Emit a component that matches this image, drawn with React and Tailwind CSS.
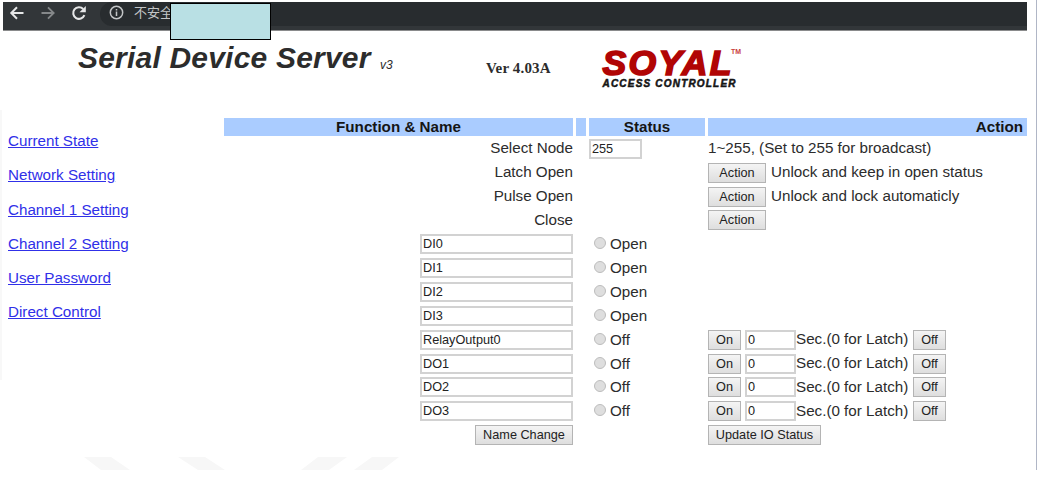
import React from "react";

const links = [
  "Current State",
  "Network Setting",
  "Channel 1 Setting",
  "Channel 2 Setting",
  "User Password",
  "Direct Control",
];

const inputs = ["DI0", "DI1", "DI2", "DI3"];
const outputs = ["RelayOutput0", "DO1", "DO2", "DO3"];

function Btn({ children, className }) {
  return (
    <button
      type="button"
      className={`h-5 shrink-0 border border-[#b4b4b4] bg-linear-to-b from-[#f4f4f4] to-[#dedede] text-center text-[12.7px] leading-[18px] whitespace-nowrap text-[#222] ${className}`}
    >
      {children}
    </button>
  );
}

function Field({ value, className }) {
  return (
    <input
      type="text"
      defaultValue={value}
      className={`h-5 shrink-0 border-2 border-[#d2d2d2] bg-white px-px text-[12.7px] leading-4 text-[#222] outline-none ${className}`}
    />
  );
}

function Row({ name, status, action }) {
  return (
    <div className="grid h-[23.86px] grid-cols-[349px_10px_116px_319px] items-center gap-x-[3px]">
      <div className="flex items-center justify-end">{name}</div>
      <div />
      <div className="flex items-center">{status}</div>
      <div className="flex items-center whitespace-nowrap">{action}</div>
    </div>
  );
}

function Radio({ label }) {
  return (
    <span className="flex items-center pl-[5px]">
      <span className="mb-[2px] size-[12px] rounded-full border border-[#bdbdbd] bg-[#dedede]" />
      <span className="pl-1 leading-5">{label}</span>
    </span>
  );
}

function BrowserBar() {
  return (
    <div className="ml-[3px] flex h-[29px] w-[1024px] border-b border-[#8a8b8c] bg-[#323639]">
      <div className="flex h-[21px] w-[97px] items-center pl-[6px]">
        <svg className="size-4" viewBox="0 0 16 16" fill="none" stroke="#e6e7e8" strokeWidth="2">
          <path d="M14.5 8H2.5M8 2.3 2.3 8 8 13.7" />
        </svg>
        <svg className="ml-[15px] size-4" viewBox="0 0 16 16" fill="none" stroke="#85888a" strokeWidth="1.8">
          <path d="M1.5 8h12M8 2.3 13.7 8 8 13.7" />
        </svg>
        <svg className="ml-[15px] size-4" viewBox="0 0 16 16" fill="none" stroke="#e6e7e8" strokeWidth="2.1">
          <path d="M13.4 10.2A5.8 5.8 0 1 1 12.2 4" />
          <path d="M14.8 1v6.3H8.5z" fill="#e6e7e8" stroke="none" />
        </svg>
      </div>
      <div className="flex h-[24px] grow rounded-l-full bg-[#282c2f] pl-[9px]">
        <svg className="mt-[3px] size-[15px]" viewBox="0 0 16 16" fill="none" stroke="#c3c5c7" strokeWidth="1.6">
          <circle cx="8" cy="8" r="6.6" />
          <path d="M8 7v4.8M8 4.2v1.7" />
        </svg>
        <span className="ml-[10px] font-['Noto_Sans_CJK_SC',sans-serif] text-[13px] leading-[20px] text-[#c3c5c7]">
          不安全
        </span>
      </div>
    </div>
  );
}

function Logo() {
  return (
    <svg className="ml-[48px] h-[50px] w-[145px]" viewBox="0 0 145 50">
      <g fontFamily="Liberation Sans, sans-serif" fontWeight="bold" fontStyle="italic">
        <text x="2.5" y="34.3" fontSize="35.5" fill="#b10505" stroke="#b10505" strokeWidth="1.7" textLength="129" lengthAdjust="spacing">
          SOYAL
        </text>
        <text x="2.5" y="45.8" fontSize="10" fill="#151515" stroke="#151515" strokeWidth="0.5" textLength="133" lengthAdjust="spacing">
          ACCESS CONTROLLER
        </text>
      </g>
      <text x="131" y="12.5" fontFamily="Liberation Sans, sans-serif" fontWeight="bold" fontSize="6.5" fill="#c94040" textLength="10" lengthAdjust="spacingAndGlyphs">
        TM
      </text>
    </svg>
  );
}

export default function App() {
  return (
    <div className="relative h-[489px] w-[1039px] overflow-hidden bg-white pt-[2px] font-['Liberation_Sans',Arial,sans-serif] text-[15.2px] text-[#2c2c2c]">
      <BrowserBar />

      <header className="flex h-[86px] items-start pl-[78px]">
        <h1 className="mt-[11px] w-[294px] text-[30px] leading-8 font-bold tracking-[0.2px] whitespace-nowrap italic">
          Serial Device Server
        </h1>
        <span className="mt-[26px] ml-[8px] w-[14px] text-[12px] leading-4 italic">v3</span>
        <span className="mt-[27px] ml-[92px] w-[66px] font-['Liberation_Serif',serif] text-[15px] leading-5 font-bold tracking-[0.15px] whitespace-nowrap">
          Ver 4.03A
        </span>
        <div className="mt-[10px]">
          <Logo />
        </div>
      </header>

      <div className="flex items-start">
        <nav className="flex w-[224px] flex-col pt-[13px] pl-[8px]">
          {links.map((label) => (
            <a key={label} href="#" className="h-[34.3px] text-[15.2px] leading-[22px] whitespace-nowrap text-[#3030e8] underline">
              {label}
            </a>
          ))}
        </nav>

        <main className="w-[803px]">
          <div className="mt-[0.5px] mb-[0.9px] grid h-[18.5px] grid-cols-[349px_10px_116px_319px] gap-x-[3px] text-center leading-[18px] font-bold text-[#151515]">
            <div className="bg-[#aaccff]">Function &amp; Name</div>
            <div className="bg-[#aaccff]" />
            <div className="bg-[#aaccff]">Status</div>
            <div className="bg-[#aaccff] pr-[4px] text-right">Action</div>
          </div>

          <Row name="Select Node" status={<Field value="255" className="w-[53px]" />} action="1~255, (Set to 255 for broadcast)" />
          <Row
            name="Latch Open"
            action={<><Btn className="w-[58px]">Action</Btn><span className="pl-[5px]">Unlock and keep in open status</span></>}
          />
          <Row
            name="Pulse Open"
            action={<><Btn className="w-[58px]">Action</Btn><span className="pl-[5px]">Unlock and lock automaticly</span></>}
          />
          <Row name="Close" action={<Btn className="w-[58px]">Action</Btn>} />
          {inputs.map((n) => (
            <Row key={n} name={<Field value={n} className="w-[153px]" />} status={<Radio label="Open" />} />
          ))}
          {outputs.map((n) => (
            <Row
              key={n}
              name={<Field value={n} className="w-[153px]" />}
              status={<Radio label="Off" />}
              action={
                <>
                  <Btn className="w-[33px]">On</Btn>
                  <Field value="0" className="ml-[4px] w-[51px]" />
                  <span className="w-[117px]">Sec.(0 for Latch)</span>
                  <Btn className="w-[33px]">Off</Btn>
                </>
              }
            />
          ))}
          <Row
            name={<Btn className="w-[98px]">Name Change</Btn>}
            action={<Btn className="w-[113px]">Update IO Status</Btn>}
          />
        </main>
      </div>

      <div className="absolute top-[3px] left-[170px] h-[37px] w-[101px] border border-black bg-[#b9e0e4]" />
      <div className="absolute top-0 left-[1036px] h-[470px] w-px bg-[#b0b6c6]" />
      <div className="absolute top-[110px] left-0 h-[270px] w-[2px] bg-[#f8f8f8]" />
      <svg className="absolute top-[457px] left-[80px] h-[13px] w-[330px]" viewBox="0 0 330 13" fill="#f7f7f7">
        <path d="M4 0h27l19 13H21zM98 0h27l20 13h-27zM238 0h29l-18 13h-28zM292 0h27l-17 13h-28z" />
      </svg>
    </div>
  );
}
